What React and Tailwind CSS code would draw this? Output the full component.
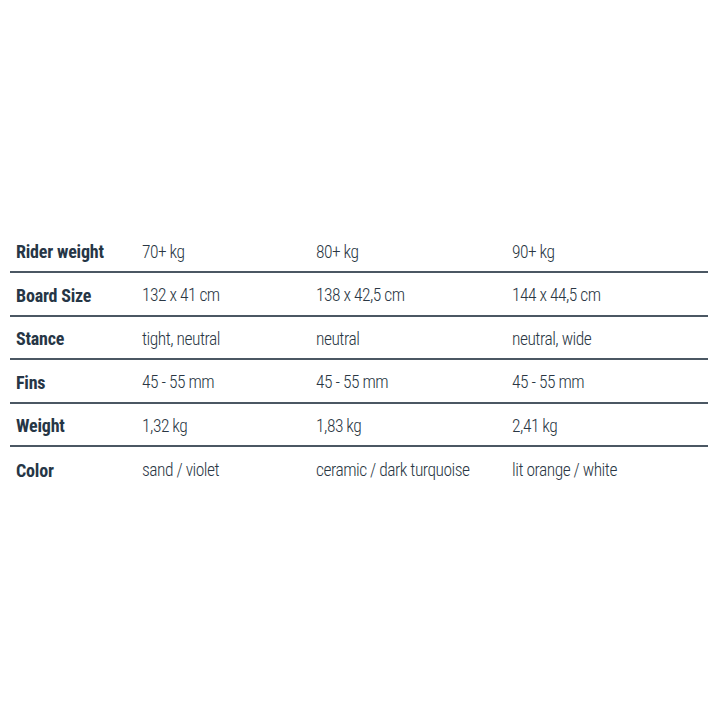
const rows = [
  ["Rider weight", "70+ kg", "80+ kg", "90+ kg"],
  ["Board Size", "132 x 41 cm", "138 x 42,5 cm", "144 x 44,5 cm"],
  ["Stance", "tight, neutral", "neutral", "neutral, wide"],
  ["Fins", "45 - 55 mm", "45 - 55 mm", "45 - 55 mm"],
  ["Weight", "1,32 kg", "1,83 kg", "2,41 kg"],
  ["Color", "sand / violet", "ceramic / dark turquoise", "lit orange / white"],
];

export default function App() {
  return (
    <div className="min-h-screen flex items-center bg-white pl-[10px] pr-[12px] font-['Roboto_Condensed','Open_Sans',sans-serif]">
      <div className="w-full">
        {rows.map((row, i) => (
          <div
            key={row[0]}
            className={
              "grid grid-cols-[132px_174px_196px_1fr] items-center h-[43.5px] pt-[3px] " +
              (i < rows.length - 1 ? "border-b-2 border-[#4b5763]" : "")
            }
          >
            <div className="pl-[6px] font-bold text-[18px] tracking-[-0.2px] text-[#263646]">{row[0]}</div>
            <div className="font-light text-[17.5px] tracking-[-0.5px] text-[#2a3744]">{row[1]}</div>
            <div className="font-light text-[17.5px] tracking-[-0.5px] text-[#2a3744]">{row[2]}</div>
            <div className="font-light text-[17.5px] tracking-[-0.5px] text-[#2a3744]">{row[3]}</div>
          </div>
        ))}
      </div>
    </div>
  );
}
